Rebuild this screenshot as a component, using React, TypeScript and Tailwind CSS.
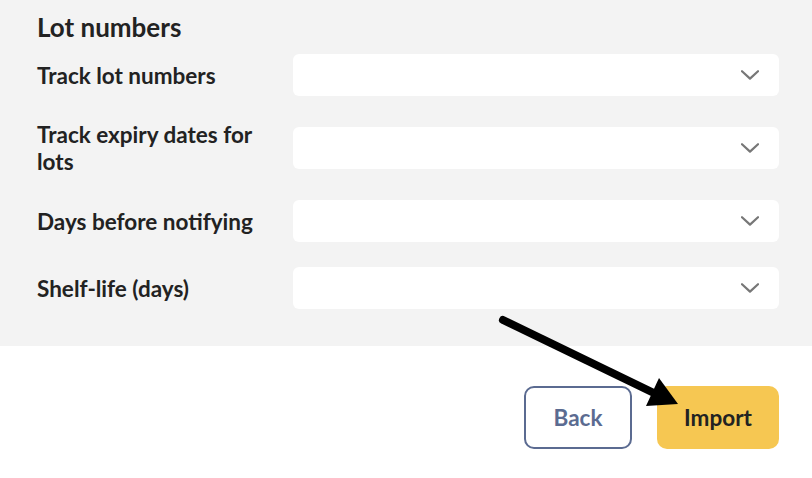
const fields = [
  "Track lot numbers",
  "Track expiry dates for lots",
  "Days before notifying",
  "Shelf-life (days)",
];

function SelectBox() {
  return (
    <div className="flex h-[42px] items-center justify-end rounded-[6px] bg-white pr-[20px]">
      <svg width="18" height="10" viewBox="0 0 18 10" fill="none">
        <polyline points="1,1.2 9,8.6 17,1.2" stroke="#777777" strokeWidth="2.2" strokeLinecap="round" strokeLinejoin="round" />
      </svg>
    </div>
  );
}

export default function App() {
  return (
    <div className="relative min-h-[478px] bg-white font-['Lato',sans-serif] text-[#222222]">
      {/* Settings panel */}
      <div className="bg-[#f3f3f3] pl-[37px] pr-[33px] pt-[11px] pb-[37px]">
        <h2 className="text-[26px] font-bold leading-[33px]">Lot numbers</h2>
        <div className="mt-[10px] flex flex-col gap-[25px]">
          {fields.map((label) => (
            <div key={label} className="grid grid-cols-[240px_1fr] items-center gap-x-[16px]">
              <label className="text-[22.5px] font-bold leading-[27px]">{label}</label>
              <SelectBox />
            </div>
          ))}
        </div>
      </div>

      {/* Actions */}
      <div className="flex justify-end gap-[25px] pr-[33px] pt-[40px]">
        <button className="h-[63px] w-[108px] rounded-[10px] border-2 border-[#5b6b91] bg-white text-[22.5px] font-bold text-[#5b6b91]">
          Back
        </button>
        <button className="h-[63px] w-[122px] rounded-[10px] bg-[#f6c752] text-[22.5px] font-bold text-[#222222]">
          Import
        </button>
      </div>

      {/* Annotation arrow */}
      <svg
        className="pointer-events-none absolute left-0 top-0"
        width="812"
        height="478"
        viewBox="0 0 812 478"
      >
        <line x1="503" y1="320" x2="658" y2="395" stroke="#000" strokeWidth="8" strokeLinecap="round" />
        <polygon points="678,404 659,378 646,406" fill="#000" />
      </svg>
    </div>
  );
}
